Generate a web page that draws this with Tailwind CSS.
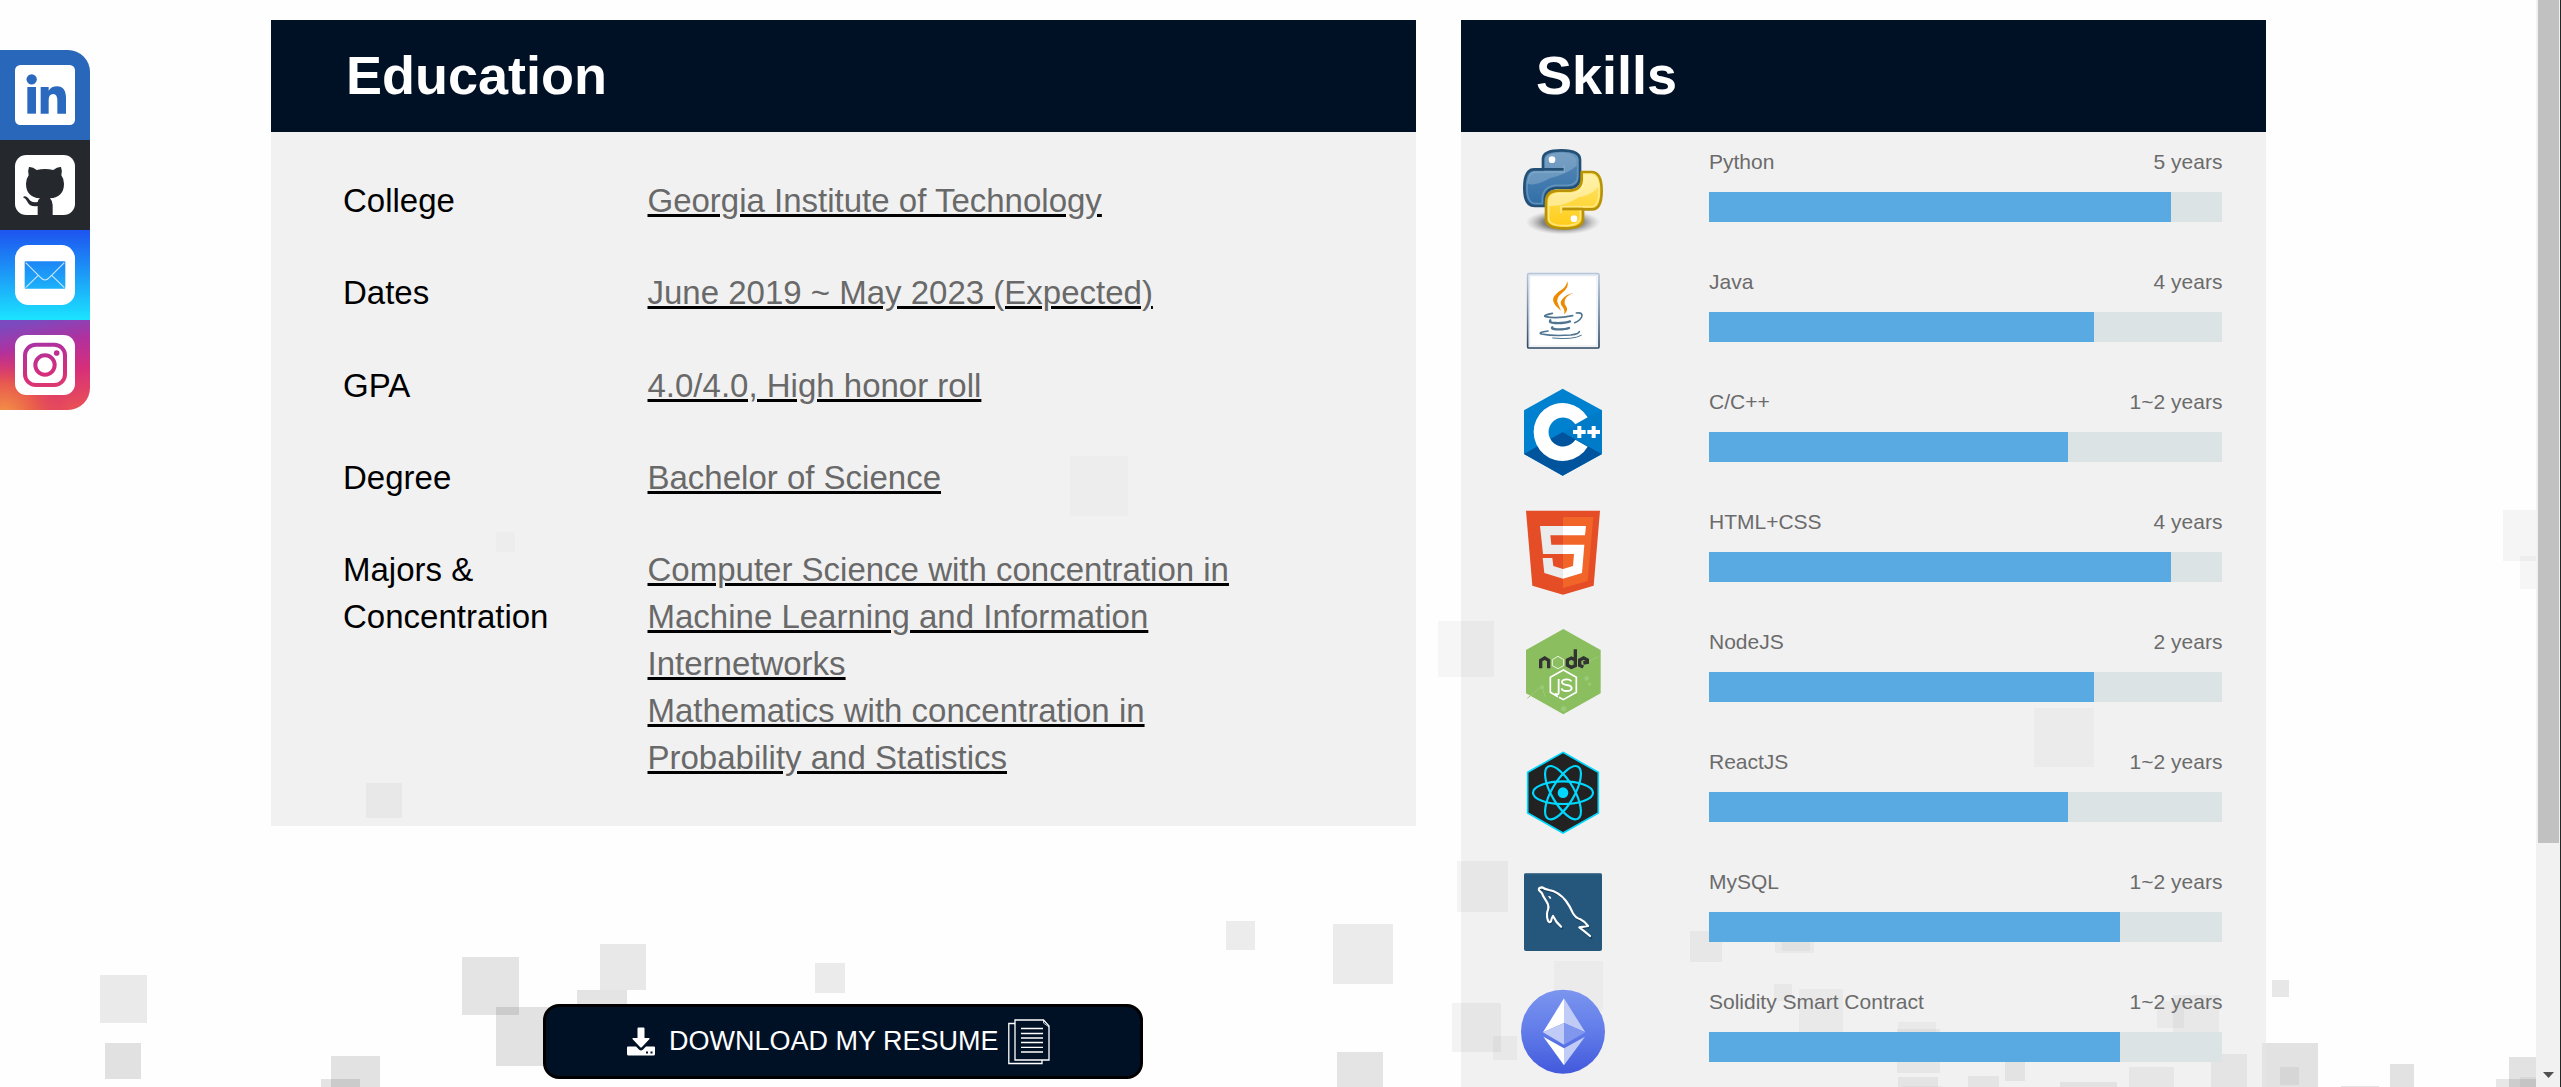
<!DOCTYPE html>
<html lang="en">
<head>
<meta charset="utf-8">
<title>Education and Skills</title>
<script src="https://cdn.jsdelivr.net/npm/@tailwindcss/browser@4"></script>
</head>
<body class="relative h-[1087px] w-full overflow-hidden bg-[#fefefe] font-['Liberation_Sans',Arial,sans-serif]">

<!-- floating particles -->
<svg class="absolute inset-0" width="2561" height="1087" viewBox="0 0 2561 1087" fill="#000" aria-hidden="true">
  <rect x="366" y="783" width="36" height="35" opacity=".035"/>
  <rect x="100" y="975" width="47" height="48" opacity=".08"/>
  <rect x="105" y="1043" width="36" height="36" opacity=".115"/>
  <rect x="331" y="1056" width="49" height="49" opacity=".11"/>
  <rect x="321" y="1079" width="39" height="39" opacity=".1"/>
  <rect x="462" y="957" width="57" height="58" opacity=".1"/>
  <rect x="496" y="1007" width="59" height="59" opacity=".11"/>
  <rect x="600" y="944" width="46" height="46" opacity=".085"/>
  <rect x="577" y="990" width="50" height="50" opacity=".1"/>
  <rect x="815" y="963" width="30" height="30" opacity=".075"/>
  <rect x="1226" y="921" width="29" height="29" opacity=".07"/>
  <rect x="1333" y="924" width="60" height="60" opacity=".075"/>
  <rect x="1337" y="1052" width="46" height="46" opacity=".1"/>
  <rect x="1457" y="861" width="51" height="51" opacity=".04"/>
  <rect x="1554" y="961" width="49" height="50" opacity=".025"/>
  <rect x="1452" y="1003" width="49" height="49" opacity=".045"/>
  <rect x="1493" y="1036" width="24" height="24" opacity=".035"/>
  <rect x="1690" y="931" width="32" height="31" opacity=".04"/>
  <rect x="1775" y="914" width="39" height="39" opacity=".03"/>
  <rect x="1782" y="922" width="28" height="29" opacity=".03"/>
  <rect x="1774" y="984" width="18" height="17" opacity=".035"/>
  <rect x="1799" y="989" width="44" height="44" opacity=".03"/>
  <rect x="1898" y="1022" width="38" height="38" opacity=".03"/>
  <rect x="1897" y="1029" width="43" height="44" opacity=".045"/>
  <rect x="1898" y="1077" width="40" height="40" opacity=".05"/>
  <rect x="1903" y="1086" width="39" height="39" opacity=".03"/>
  <rect x="1968" y="1076" width="31" height="31" opacity=".05"/>
  <rect x="2005" y="1061" width="20" height="20" opacity=".055"/>
  <rect x="2060" y="1082" width="57" height="57" opacity=".06"/>
  <rect x="2129" y="1067" width="45" height="45" opacity=".045"/>
  <rect x="2157" y="1001" width="27" height="27" opacity=".03"/>
  <rect x="2173" y="995" width="46" height="46" opacity=".035"/>
  <rect x="2211" y="1054" width="36" height="45" opacity=".05"/>
  <rect x="2262" y="1043" width="4" height="56" opacity=".05"/>
  <rect x="2266" y="1043" width="52" height="56" opacity=".11"/>
  <rect x="2280" y="1067" width="19" height="18" opacity=".05"/>
  <rect x="2272" y="980" width="17" height="17" opacity=".09"/>
  <rect x="2341" y="1086" width="38" height="38" opacity=".1"/>
  <rect x="2390" y="1064" width="24" height="24" opacity=".11"/>
  <rect x="2509" y="1057" width="50" height="50" opacity=".11"/>
  <rect x="2496" y="1079" width="50" height="50" opacity=".09"/>
  <rect x="2520" y="1077" width="30" height="30" opacity=".04"/>
  <rect x="1070" y="456" width="58" height="60" opacity=".015"/>
  <rect x="496" y="532" width="19" height="20" opacity=".015"/>
  <rect x="1438" y="621" width="56" height="56" opacity=".03"/>
  <rect x="2034" y="708" width="60" height="59" opacity=".025"/>
  <rect x="2503" y="510" width="50" height="51" opacity=".035"/>
  <rect x="2520" y="556" width="33" height="33" opacity=".03"/>
</svg>

<main class="relative flex items-start gap-[45px] pt-5 pl-[271px]">
  <div class="w-[1145px] shrink-0">
    <section class="h-[806px] bg-black/5">
      <h2 class="flex h-28 items-center bg-[#001126] pb-[3px] pl-[75px] text-[54px] leading-none font-bold text-white">Education</h2>
      <dl class="grid grid-cols-[304.5px_610px] gap-y-[45.3px] pt-[45px] pl-[72px] text-[33px] leading-[47px] text-black">
        <dt>College</dt><dd><span class="text-[#696969] underline decoration-black decoration-[3px]">Georgia Institute of Technology</span></dd>
        <dt>Dates</dt><dd><span class="text-[#696969] underline decoration-black decoration-[3px]">June 2019 ~ May 2023 (Expected)</span></dd>
        <dt>GPA</dt><dd><span class="text-[#696969] underline decoration-black decoration-[3px]">4.0/4.0, High honor roll</span></dd>
        <dt>Degree</dt><dd><span class="text-[#696969] underline decoration-black decoration-[3px]">Bachelor of Science</span></dd>
        <dt>Majors &amp;<br>Concentration</dt>
        <dd><span class="text-[#696969] underline decoration-black decoration-[3px]">Computer Science with concentration in<br>Machine Learning and Information<br>Internetworks<br>Mathematics with concentration in<br>Probability and Statistics</span></dd>
      </dl>
    </section>
    <a class="mt-[178px] ml-[272px] flex h-[75px] w-[600px] items-center rounded-[16px] border-[3px] border-black bg-[#001126] pl-[81px] text-[27px] whitespace-nowrap text-white">
      <svg width="28" height="29" viewBox="0 0 28 29" fill="#fff"><path d="M10.5 1.5q0-1 1-1h5q1 0 1 1V11h4.2q1.700 0 .6 1.300L15 20q-1 1-2 0L5.700 12.300Q4.600 11 6.300 11h4.200zM1 19.500h8l3.200 3.200q1.800 1.600 3.600 0l3.200-3.200h8q1 0 1 1V27q0 1.500-1.500 1.500h-25Q0 28.500 0 27v-6.500q0-1 1-1z"/><rect x="19" y="24.500" width="2" height="2" fill="#001126"/><rect x="23.500" y="24.500" width="2" height="2" fill="#001126"/></svg>
      <span class="ml-[14px] w-[331px]">DOWNLOAD MY RESUME</span>
      <svg class="ml-[8px]" width="42" height="46" viewBox="0 0 42 46" fill="none" stroke="#fff" stroke-width="1.300"><path d="M7 4.500H.8V44.500H34V41"/><path d="M7 1H35.500L41 7V41H7z"/><path d="M35.500 1v3l5.500 4" stroke-width=".8"/><path d="M13 9.500H35M13 14.500H35M13 19H35M13 23.500H35M13 28.300H35M13 33H35"/></svg>
    </a>
  </div>

  <section class="h-[1100px] w-[805px] shrink-0 bg-black/5">
    <h2 class="flex h-28 items-center bg-[#001126] pb-[3px] pl-[75px] text-[54px] leading-none font-bold text-white">Skills</h2>
    <ul class="text-[21px] leading-6 text-[#6b6b6b]">
      <li class="flex h-[120px] gap-[101px] pt-[15px] pl-[57px]">
        <svg class="shrink-0" width="90" height="90" viewBox="204 141 270 270">
          <defs>
            <radialGradient id="sh"><stop offset="0" stop-color="#333"/><stop offset=".55" stop-color="#777" stop-opacity=".85"/><stop offset="1" stop-color="#aaa" stop-opacity="0"/></radialGradient>
            <linearGradient id="pb" x2="0" y2="1"><stop stop-color="#5c8bb5"/><stop offset="1" stop-color="#2f6ea8"/></linearGradient>
            <linearGradient id="py" x2="0" y2="1"><stop stop-color="#ffe873"/><stop offset="1" stop-color="#ffcb15"/></linearGradient>
          </defs>
          <ellipse cx="339" cy="367" rx="112" ry="37" fill="url(#sh)"/>
          <path d="M279 208V176Q279 151 335 151Q390 151 390 179V230Q390 264 352 264H318Q286 267 285 298V318H254Q223 318 223 264Q223 208 252 208Z" fill="url(#pb)" stroke="#255076" stroke-width="8" stroke-linejoin="round"/>
          <path d="M286 214V180Q288 159 335 159Q383 159 383 182V228Q383 256 350 256H316Q279 260 277 296V311H256Q231 309 231 264Q231 216 256 216H342V196" fill="none" stroke="#779fc2" stroke-width="5" opacity=".65"/>
          <path d="M232 250Q250 262 300 235Q350 222 380 198V178Q372 160 335 160Q287 160 287 180V214H255Q235 216 232 250Z" fill="#b8d0e4" opacity=".32"/>
          <path d="M279 208H341" stroke="#255076" stroke-width="8"/>
          <path d="M399 328V356Q399 385 343 385Q288 385 288 356V306Q288 272 326 272H360Q393 269 395 240V216H424Q455 216 455 272Q455 328 426 328Z" fill="url(#py)" stroke="#b89307" stroke-width="8" stroke-linejoin="round"/>
          <path d="M391 322V353Q389 377 343 377Q296 377 296 354V308Q296 280 328 280H362Q400 277 402 242V224H422Q447 227 447 272Q447 320 422 320H333V340" fill="none" stroke="#fff0a0" stroke-width="5" opacity=".7"/>
          <path d="M297 318Q345 320 386 292Q430 284 446 258Q444 226 422 225H403Q402 277 362 280H328Q297 280 297 318Z" fill="#fffbe0" opacity=".5"/>
          <path d="M337 327H399" stroke="#b89307" stroke-width="8"/>
          <circle cx="306" cy="179" r="10" fill="#fff"/><circle cx="372" cy="356" r="10" fill="#fff"/>
        </svg>
        <div class="w-[513.400px] pt-[3px]">
          <div class="flex justify-between"><span>Python</span><span>5 years</span></div>
          <div class="mt-[18px] h-[30px] bg-[#dbe3e5]"><div class="h-full bg-[#59a9e2]" style="width:90%"></div></div>
        </div>
      </li>
      <li class="flex h-[120px] gap-[101px] pt-[15px] pl-[57px]">
        <svg class="shrink-0" width="90" height="90" viewBox="204 501 270 270" fill="none">
          <defs><linearGradient id="jb" x2="0" y2="1"><stop stop-color="#b5c5da"/><stop offset=".5" stop-color="#7089a2"/><stop offset="1" stop-color="#2d4760"/></linearGradient></defs>
          <rect x="233" y="521" width="214" height="223" rx="4" fill="#fff" stroke="url(#jb)" stroke-width="5"/>
          <rect x="239" y="527" width="202" height="211" stroke="#dfe6ee" stroke-width="3"/>
          <g fill="#ec8a00"><path d="M351 543Q360 560 336 579Q315 596 324 611L333 632Q300 607 313 588Q322 576 338 567Q351 557 351 543Z"/><path d="M371 579Q346 588 344 602Q342 611 349 620Q356 631 342 643Q346 631 338 621Q326 608 338 596Q349 583 371 579Z"/></g>
          <g stroke="#4e7490" stroke-linecap="round"><path d="M307 640Q276 647 287 650Q320 657 368 647" stroke-width="5"/><path d="M379 639Q400 636 395 651Q390 662 374 668" stroke-width="5"/><path d="M301 661Q296 669 315 669Q345 670 360 664" stroke-width="7"/><path d="M307 682Q302 687 320 688Q345 689 357 684" stroke-width="7"/><path d="M294 693Q262 698 274 702Q310 709 363 705Q387 702 388 695" stroke-width="5"/><path d="M308 714Q370 720 394 706" stroke-width="3"/></g>
        </svg>
        <div class="w-[513.400px] pt-[3px]">
          <div class="flex justify-between"><span>Java</span><span>4 years</span></div>
          <div class="mt-[18px] h-[30px] bg-[#dbe3e5]"><div class="h-full bg-[#59a9e2]" style="width:75%"></div></div>
        </div>
      </li>
      <li class="flex h-[120px] gap-[101px] pt-[15px] pl-[57px]">
        <svg class="shrink-0" width="90" height="90" viewBox="204 861 270 270">
          <path d="M338 866L456 931V1062L338 1127L222 1062V931Z" fill="#0081cf"/>
          <path d="M338 996L222 1062L338 1127L456 1062Z" fill="#00549d"/>
          <path d="M338 996L456 929V1062Z" fill="#007bc8"/>
          <path d="M413 952A87 87 0 1 0 413 1040L376 1019A43.500 43.500 0 1 1 376 973Z" fill="#fff"/>
          <path d="M382 978h12v12h13v12h-13v12h-12v-12h-13v-12h13zM425 978h12v12h13v12h-13v12h-12v-12h-13v-12h13z" fill="#fff"/>
        </svg>
        <div class="w-[513.400px] pt-[3px]">
          <div class="flex justify-between"><span>C/C++</span><span>1~2 years</span></div>
          <div class="mt-[18px] h-[30px] bg-[#dbe3e5]"><div class="h-full bg-[#59a9e2]" style="width:70%"></div></div>
        </div>
      </li>
      <li class="flex h-[120px] gap-[101px] pt-[15px] pl-[57px]">
        <svg class="shrink-0" width="90" height="90" viewBox="204 1221 270 270">
          <path d="M228 1232H450L431 1457L339 1484L247 1457Z" fill="#e44d26"/>
          <path d="M339 1251H430L413 1443L339 1464Z" fill="#f16529"/>
          <path d="M339 1278H270L279 1362H339V1334H304L301 1306H339ZM339 1407L310 1398L307 1374H278L283 1419L339 1436Z" fill="#ebebeb"/>
          <path d="M339 1278H408L405 1306H339ZM339 1334H403L396 1419L339 1436V1407L369 1398L372 1362H339Z" fill="#fff"/>
        </svg>
        <div class="w-[513.400px] pt-[3px]">
          <div class="flex justify-between"><span>HTML+CSS</span><span>4 years</span></div>
          <div class="mt-[18px] h-[30px] bg-[#dbe3e5]"><div class="h-full bg-[#59a9e2]" style="width:90%"></div></div>
        </div>
      </li>
      <li class="flex h-[120px] gap-[101px] pt-[15px] pl-[57px]">
        <svg class="shrink-0" width="90" height="90" viewBox="204 141 270 270" fill="none">
          <path d="M340 147L452 210V340L340 403L228 340V210Z" fill="#8abe5e"/>
          <path d="M232 355L276 318L286 352M378 262L446 230" stroke="#9bc977" stroke-width="3"/>
          <g fill="#9bc977"><circle cx="410" cy="295" r="7"/><circle cx="419" cy="312" r="5"/><circle cx="341" cy="386" r="8"/><circle cx="276" cy="322" r="6"/></g>
          <g stroke="#333" stroke-width="10"><path d="M272 265V241L284 234L296 241V265"/><path d="M376 208V257L364 262L352 256V240L364 234L376 240"/><path d="M400 261L389 256V240L401 234L412 240V247L400 249"/></g>
          <path d="M324 229L341 239V257L324 266L307 257V239Z" stroke="#fff" stroke-width="2.500"/>
          <path d="M324 350L301 337V292L340 270L379 292V337L340 359L327 352" stroke="#fff" stroke-width="5"/>
          <path d="M326 297V338Q326 346 314 341" stroke="#fff" stroke-width="5.500"/>
          <path d="M364 304Q361 298 350 298Q336 298 336 306Q336 313 350 315Q365 317 365 325Q364 333 350 333Q336 333 335 325" stroke="#fff" stroke-width="5.500"/>
        </svg>
        <div class="w-[513.400px] pt-[3px]">
          <div class="flex justify-between"><span>NodeJS</span><span>2 years</span></div>
          <div class="mt-[18px] h-[30px] bg-[#dbe3e5]"><div class="h-full bg-[#59a9e2]" style="width:75%"></div></div>
        </div>
      </li>
      <li class="flex h-[120px] gap-[101px] pt-[15px] pl-[57px]">
        <svg class="shrink-0" width="90" height="90" viewBox="204 501 270 270" fill="none" stroke="#00d8ff">
          <path d="M339 517L445 577V699L339 759L233 699V577Z" fill="#222" stroke-width="5"/>
          <g stroke-width="6.500"><ellipse cx="339" cy="638" rx="90" ry="34"/><ellipse cx="339" cy="638" rx="90" ry="34" transform="rotate(60 339 638)"/><ellipse cx="339" cy="638" rx="90" ry="34" transform="rotate(120 339 638)"/></g>
          <circle cx="339" cy="638" r="16" fill="#00d8ff" stroke="none"/>
        </svg>
        <div class="w-[513.400px] pt-[3px]">
          <div class="flex justify-between"><span>ReactJS</span><span>1~2 years</span></div>
          <div class="mt-[18px] h-[30px] bg-[#dbe3e5]"><div class="h-full bg-[#59a9e2]" style="width:70%"></div></div>
        </div>
      </li>
      <li class="flex h-[120px] gap-[101px] pt-[15px] pl-[57px]">
        <svg class="shrink-0" width="90" height="90" viewBox="204 861 270 270" fill="none">
          <rect x="222" y="879" width="234" height="234" rx="6" fill="#25567b"/>
          <path d="M225 881H453" stroke="#5a7f9c" stroke-width="3"/>
          <g stroke-linejoin="round" stroke-linecap="round">
            <path d="M335 1042Q318 1027 310 1008Q304 1016 303 1024Q297 1031 293 1019Q288 1003 295 986Q297 974 288 962Q279 949 276 940L267 929Q264 922 277 924Q283 929 297 930Q326 935 348 963Q360 979 368 998Q375 1013 391 1018Q404 1024 414 1038L388 1042Q404 1054 422 1070" stroke="#183f5d" stroke-width="6" transform="translate(2 4)"/>
            <path d="M333 1040Q318 1027 309 1008Q304 1016 303 1024Q297 1031 293 1019Q288 1003 295 986Q297 974 288 962Q279 949 276 940L267 931Q264 922 277 922Q283 927 297 930Q326 935 348 963Q360 979 368 998Q375 1013 391 1018Q404 1024 414 1038L388 1042Q404 1054 420 1068" stroke="#fff" stroke-width="6.500"/>
            <path d="M294 948Q302 947 304 955L300 957Z" fill="#fff"/>
          </g>
        </svg>
        <div class="w-[513.400px] pt-[3px]">
          <div class="flex justify-between"><span>MySQL</span><span>1~2 years</span></div>
          <div class="mt-[18px] h-[30px] bg-[#dbe3e5]"><div class="h-full bg-[#59a9e2]" style="width:80%"></div></div>
        </div>
      </li>
      <li class="flex h-[120px] gap-[101px] pt-[15px] pl-[57px]">
        <svg class="shrink-0" width="90" height="90" viewBox="204 1221 270 270">
          <defs><linearGradient id="eg" x2="0" y2="1"><stop stop-color="#7b95ef"/><stop offset=".5" stop-color="#617ce9"/><stop offset="1" stop-color="#4259dc"/></linearGradient></defs>
          <circle cx="339" cy="1355" r="126" fill="url(#eg)"/>
          <path d="M342 1255L279 1357L342 1329Z" fill="#fff"/><path d="M342 1255L406 1357L342 1329Z" fill="#c0cbf6"/>
          <path d="M342 1329L279 1357L342 1394Z" fill="#c0cbf6"/><path d="M342 1329L406 1357L342 1394Z" fill="#8197ee"/>
          <path d="M280 1370L342 1405V1456Z" fill="#fff"/><path d="M405 1370L342 1405V1456Z" fill="#c0cbf6"/>
        </svg>
        <div class="w-[513.400px] pt-[3px]">
          <div class="flex justify-between"><span>Solidity Smart Contract</span><span>1~2 years</span></div>
          <div class="mt-[18px] h-[30px] bg-[#dbe3e5]"><div class="h-full bg-[#59a9e2]" style="width:80%"></div></div>
        </div>
      </li>
    </ul>
  </section>
</main>

<!-- social links pinned to the left edge -->
<nav class="absolute top-[50px] left-0 flex w-[90px] flex-col overflow-hidden rounded-r-[22px]">
  <svg class="bg-[#2867b9]" width="90" height="90" viewBox="0 30 270 270">
    <rect x="45" y="75" width="180" height="180" rx="16" fill="#fff"/>
    <g fill="#2a69bd"><circle cx="95" cy="118" r="15.500"/><rect x="82" y="141" width="26" height="80"/><path d="M122 141H146V152Q154 139 171 139Q198 139 198 176V221H172V182Q172 162 160 162Q146 162 146 181V221H122Z"/></g>
  </svg>
  <svg class="bg-[#25292e]" width="90" height="90" viewBox="0 300 270 270">
    <rect x="45" y="345" width="180" height="180" rx="34" fill="#fff"/>
    <path d="M87 381Q98 380 110 390Q135 384 160 390Q172 380 183 381Q188 394 184 406Q192 417 192 431Q192 471 150 475Q158 483 158 495V526H113V498Q90 502 82 485Q77 474 69 472Q75 464 85 475Q93 490 113 486Q114 479 120 475Q78 471 78 431Q78 417 86 406Q82 394 87 381Z" fill="#25292e"/>
  </svg>
  <svg width="90" height="90" viewBox="0 570 270 270">
    <defs><linearGradient id="mg" gradientUnits="userSpaceOnUse" x1="0" y1="575" x2="0" y2="840"><stop stop-color="#1d56f0"/><stop offset="1" stop-color="#1be4ff"/></linearGradient></defs>
    <rect y="570" width="270" height="270" fill="url(#mg)"/>
    <rect x="45" y="615" width="180" height="180" rx="40" fill="#fff"/>
    <rect x="74" y="664" width="122" height="82" rx="3" fill="url(#mg)"/>
    <path d="M77 668L122 713Q135 727 148 713L193 668M77 743L114 707M193 743L156 707" fill="none" stroke="#c8e6ff" stroke-width="3.500"/>
  </svg>
  <svg width="90" height="90" viewBox="0 840 270 270">
    <defs>
      <linearGradient id="ig" gradientUnits="userSpaceOnUse" x1="110" y1="840" x2="160" y2="1110"><stop stop-color="#7b4abf"/><stop offset=".28" stop-color="#b0319f"/><stop offset=".6" stop-color="#d62e7b"/><stop offset="1" stop-color="#e84e58"/></linearGradient>
      <radialGradient id="io" gradientUnits="userSpaceOnUse" cx="10" cy="1130" r="200"><stop stop-color="#f49a45"/><stop offset=".5" stop-color="#ea5f49" stop-opacity=".9"/><stop offset="1" stop-color="#d8306f" stop-opacity="0"/></radialGradient>
    </defs>
    <rect y="840" width="270" height="270" fill="url(#ig)"/><rect y="840" width="270" height="270" fill="url(#io)"/>
    <rect x="45" y="885" width="180" height="180" rx="34" fill="#fff"/>
    <g fill="none" stroke="url(#ig)" stroke-width="12"><rect x="75" y="914" width="120" height="121" rx="32"/><circle cx="135" cy="975" r="29"/></g>
    <circle cx="170" cy="939" r="8.500" fill="#bd2f92"/>
  </svg>
</nav>

<!-- page scrollbar -->
<aside class="absolute top-0 right-0 flex h-full w-[25px] flex-col items-center justify-between border-r border-[#222826] bg-[#f1f1f1] pr-px pb-[9px] pl-0.5">
  <div class="h-[843px] w-[21px] bg-[#c1c1c1]"></div>
  <svg width="11" height="6" viewBox="0 0 11 6"><path d="M0 0H11L5.500 6Z" fill="#505050"/></svg>
</aside>
</body>
</html>
